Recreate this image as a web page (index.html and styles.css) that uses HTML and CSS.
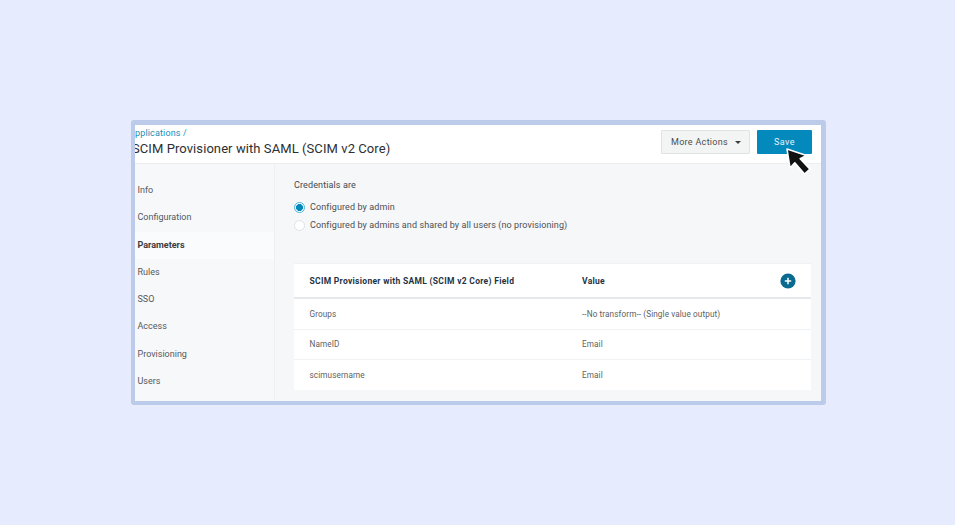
FILE: index.html
```html
<!DOCTYPE html>
<html lang="en">
<head>
<meta charset="utf-8">
<title>SCIM Provisioner Parameters</title>
<link rel="stylesheet" href="styles.css">
</head>
<body>
<main class="frame">
  <header class="topbar">
    <div class="heading">
      <div class="crumb">Applications /</div>
      <h1 class="title">SCIM Provisioner with SAML (SCIM v2 Core)</h1>
    </div>
    <div class="actions">
      <button class="btn-more">More Actions<span class="caret"></span></button>
      <button class="btn-save">Save</button>
    </div>
  </header>
  <div class="body">
    <nav class="side">
      <a class="side-item">Info</a>
      <a class="side-item">Configuration</a>
      <a class="side-item active">Parameters</a>
      <a class="side-item">Rules</a>
      <a class="side-item">SSO</a>
      <a class="side-item">Access</a>
      <a class="side-item">Provisioning</a>
      <a class="side-item">Users</a>
    </nav>
    <section class="content">
      <div class="label">Credentials are</div>
      <div class="radio-row"><span class="radio on"></span>Configured by admin</div>
      <div class="radio-row"><span class="radio"></span>Configured by admins and shared by all users (no provisioning)</div>
      <div class="table">
        <div class="row head">
          <div class="c1">SCIM Provisioner with SAML (SCIM v2 Core) Field</div>
          <div class="c2">Value</div>
          <span class="add">
            <svg viewBox="0 0 16 16" width="16" height="16"><circle cx="8" cy="8" r="7.6" fill="#0a6a8f"/><path d="M8 4.8v6.4M4.8 8h6.4" stroke="#fff" stroke-width="1.5"/></svg>
          </span>
        </div>
        <div class="row"><div class="c1">Groups</div><div class="c2">--No transform-- (Single value output)</div></div>
        <div class="row"><div class="c1">NameID</div><div class="c2">Email</div></div>
        <div class="row last"><div class="c1">scimusername</div><div class="c2">Email</div></div>
      </div>
    </section>
  </div>
  <svg class="cursor" viewBox="0 0 28 30" width="28" height="30">
    <path d="M2 2 L5 21 L9.8 15.8 L19.5 27 L25 22.2 L15.2 11.6 L21.5 8.4 Z" fill="#111" stroke="#fff" stroke-width="1.6" stroke-linejoin="round"/>
  </svg>
</main>
</body>
</html>
```
FILE: styles.css
```css
* { box-sizing: border-box; }
html, body { margin: 0; height: 100%; }
body {
  background: #e6ebfd;
  font-family: Roboto, "Liberation Sans", sans-serif;
  padding: 120px 0 0 131px;
  overflow: hidden;
}
.frame {
  position: relative;
  width: 695px;
  height: 285px;
  border: solid #bccbea;
  border-width: 5px 5px 4px 4px;
  border-radius: 3px;
  background: #f5f7f9;
  display: flex;
  flex-direction: column;
}
.topbar {
  height: 39px;
  flex: none;
  background: #fff;
  border-bottom: 1px solid #ebeef0;
  display: flex;
  justify-content: space-between;
  overflow: hidden;
}
.heading { padding-top: 3px; }
.crumb { margin-left: -6px; font-size: 9px; line-height: 11px; letter-spacing: .15px; color: #1a8db5; white-space: nowrap; }
.title { margin: 1px 0 0 -3px; font-size: 13px; line-height: 17px; font-weight: 400; letter-spacing: .08px; color: #2c2f33; white-space: nowrap; }
.actions { display: flex; gap: 7px; padding: 5px 9px 0 0; align-items: flex-start; }
.btn-more, .btn-save { font-family: inherit; height: 24px; font-size: 9px; border-radius: 1px; padding: 0; cursor: pointer; }
.btn-more { width: 89px; letter-spacing: .3px; padding-left: 1px; background: #f3f5f5; border: 1px solid #dfe3e4; color: #4a4d50; display: flex; align-items: center; justify-content: center; }
.caret { width: 0; height: 0; margin-left: 7px; border: 3px solid transparent; border-top: 3px solid #3c3f42; border-bottom: 0; }
.btn-save { width: 55px; letter-spacing: .5px; background: #0489bd; border: 0; color: #e4f2f8; }
.body { flex: 1; display: flex; min-height: 0; }
.side { width: 140px; flex: none; border-right: 1px solid #edf0f2; background: #f7f8fa; padding-top: 13px; }
.side-item { display: block; height: 27.3px; line-height: 27.3px; padding-left: 2.5px; font-size: 9px; color: #55585c; }
.side-item.active { background: #fafbfc; color: #3a3d42; font-weight: 700; }
.content { flex: 1; padding: 16px 10px 0 19px; min-width: 0; }
.label { font-size: 9px; line-height: 11px; letter-spacing: .12px; color: #45484c; margin-bottom: 7.6px; }
.radio-row { display: flex; align-items: center; height: 17.7px; font-size: 9px; letter-spacing: .1px; color: #4c4f53; white-space: nowrap; }
.radio { width: 11px; height: 11px; flex: none; margin-right: 5px; border-radius: 50%; border: 1px solid #dfe2e4; background: #fff; }
.radio.on { border-color: #4fb4d8; background: radial-gradient(circle, #0489bd 0 3.2px, #fff 3.8px); }
.table { margin-top: 29.4px; background: #fff; border: 1px solid #f0f2f4; border-width: 1px 0 0; }
.row { display: flex; align-items: center; height: 30.2px; position: relative; border-bottom: 1px solid #f0f2f4; font-size: 8.2px; letter-spacing: .1px; color: #5c5f63; }
.row.last { border-bottom: 0; height: 30px; }
.row.head { height: 35px; border-bottom: 2px solid #e6e9eb; font-size: 8.5px; color: #1d3345; font-weight: 700; letter-spacing: .3px; }
.c1 { width: 288px; padding-left: 15.5px; flex: none; }
.c2 { flex: 1; }
.add { position: absolute; right: 15px; top: 9px; width: 16px; height: 16px; display: block; }
.add svg { display: block; }
.cursor { position: absolute; left: 650px; top: 22px; }
```
